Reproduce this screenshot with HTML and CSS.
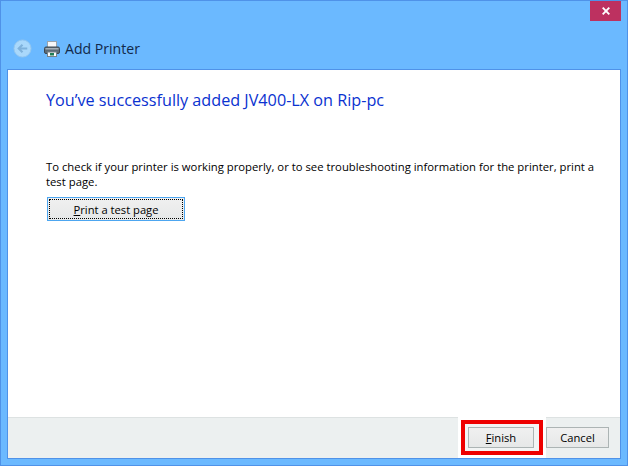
FILE: index.html
```html
<!DOCTYPE html>
<html lang="en">
<head>
<meta charset="utf-8">
<title>Add Printer</title>
<link rel="stylesheet" href="styles.css">
</head>
<body>
<div class="window">
  <div class="titlebar">
    <div class="close">
      <svg class="close-x" width="8" height="8" viewBox="0 0 8 8"><path d="M.7.7l6.6 6.6M7.3.7L.7 7.3" stroke="#fff" stroke-width="1.9" fill="none"/></svg>
    </div>
  </div>
  <div class="header">
    <svg class="back" width="19" height="19" viewBox="0 0 20 20">
      <circle cx="10" cy="10" r="9" fill="#a9d8fb" stroke="#94c6ee" stroke-width="1"/>
      <path d="M15 10H6M10 6l-4 4 4 4" stroke="#7fb2dc" stroke-width="2.2" fill="none"/>
    </svg>
    <svg class="printer" width="16" height="16" viewBox="0 0 16 16">
      <rect x="3.5" y="0.5" width="9" height="6" fill="#f6f8fa" stroke="#9aa4ac"/>
      <rect x="0.5" y="6" width="15" height="6.5" rx="1.5" fill="#5d6c78" stroke="#3c4852"/>
      <rect x="1.5" y="7" width="13" height="1.5" fill="#a5b0b8"/>
      <rect x="3.5" y="11" width="9" height="4.5" fill="#fafbfb" stroke="#77828a"/>
      <rect x="6" y="12" width="4" height="2.5" fill="#1f7d55"/>
    </svg>
    <span class="title">Add Printer</span>
  </div>
  <div class="client">
    <div class="content">
      <h1 class="heading">You’ve successfully added JV400-LX on Rip-pc</h1>
      <p class="message">To check if your printer is working properly, or to see troubleshooting information for the printer, print a test page.</p>
      <button class="btn btn-test"><span class="focus"><u>P</u>rint a test page</span></button>
    </div>
    <div class="footer">
      <div class="halo">
        <div class="redbox">
          <button class="btn btn-foot"><u>F</u>inish</button>
        </div>
      </div>
      <button class="btn btn-foot btn-cancel">Cancel</button>
    </div>
  </div>
</div>
</body>
</html>
```
FILE: styles.css
```css
* { box-sizing: border-box; }
html, body { margin: 0; padding: 0; }
body { width: 628px; height: 466px; overflow: hidden; font-family: "Open Sans", "Noto Sans", sans-serif; }
.window {
  width: 628px; height: 466px;
  background: #6bb9ff;
  border: 1px solid #4f92e8;
  display: flex; flex-direction: column;
}
.titlebar { height: 20px; display: flex; justify-content: flex-end; padding-right: 6px; flex: none; }
.close { width: 31px; height: 20px; background: #bd3160; display: flex; align-items: center; justify-content: center; }
.close-x { display: block; }
.header { height: 48px; flex: none; display: flex; align-items: center; padding: 7px 0 0 12px; }
.back { flex: none; }
.printer { flex: none; margin-left: 12px; }
.title { margin-left: 5px; font-size: 14.1px; color: #12294a; }
.client {
  flex: 1; margin: 0 6px 6px 6px;
  border: 1px solid #4f92e8;
  background: #fff;
  display: flex; flex-direction: column;
}
.content { flex: 1; padding: 19px 20px 0 38px; }
.heading { margin: 0; font-size: 16.2px; font-weight: 400; color: #0a32d0; line-height: 22px; }
.message { margin: 48px 0 0; font-size: 11.3px; line-height: 15px; color: #000; }
.btn {
  font-family: inherit; font-size: 11.2px; color: #000;
  background: linear-gradient(#f0f0f0, #e6e8e8);
  border: 1px solid #acb4b4; padding: 0; margin: 0;
  height: 21px; display: block;
}
.btn-test { width: 138px; height: 24px; margin: 8px 0 0 1px; border: 1px solid #4da6f0; padding: 1px; }
.focus { display: flex; align-items: center; justify-content: center; height: 100%; border: 1px dotted #000; white-space: pre; }
.footer {
  height: 41px; flex: none;
  background: #ecf0f0; border-top: 1px solid #dde2e2;
  display: flex; justify-content: flex-end; padding-right: 11px;
}
.halo { background: #fff; padding: 3px; margin-top: -1px; height: 41px; flex: none; }
.redbox { border: 4px solid #ee0000; background: #f2f4f4; padding: 3px 5px 3px 3px; height: 35px; }
.btn-foot { width: 66px; }
.btn-cancel { width: 63px; margin-top: 9px; }
```
